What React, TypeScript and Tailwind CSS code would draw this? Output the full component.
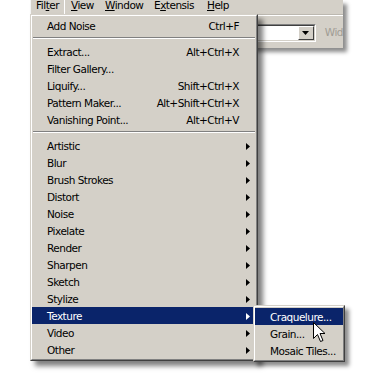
import React from "react";

type Item = { label: string; shortcut?: string; arrow?: boolean; active?: boolean };

const groups: Item[][] = [
  [{ label: "Add Noise", shortcut: "Ctrl+F" }],
  [
    { label: "Extract...", shortcut: "Alt+Ctrl+X" },
    { label: "Filter Gallery..." },
    { label: "Liquify...", shortcut: "Shift+Ctrl+X" },
    { label: "Pattern Maker...", shortcut: "Alt+Shift+Ctrl+X" },
    { label: "Vanishing Point...", shortcut: "Alt+Ctrl+V" },
  ],
  [
    { label: "Artistic", arrow: true },
    { label: "Blur", arrow: true },
    { label: "Brush Strokes", arrow: true },
    { label: "Distort", arrow: true },
    { label: "Noise", arrow: true },
    { label: "Pixelate", arrow: true },
    { label: "Render", arrow: true },
    { label: "Sharpen", arrow: true },
    { label: "Sketch", arrow: true },
    { label: "Stylize", arrow: true },
    { label: "Texture", arrow: true, active: true },
    { label: "Video", arrow: true },
    { label: "Other", arrow: true },
  ],
];

const subItems: Item[] = [
  { label: "Craquelure...", active: true },
  { label: "Grain..." },
  { label: "Mosaic Tiles..." },
];

function Arrow({ white }: { white?: boolean }) {
  return (
    <svg width="4" height="7" viewBox="0 0 4 7" className="shrink-0 -mt-[1px]">
      <path d="M0 0L4 3.5L0 7Z" fill={white ? "#ffffff" : "#000000"} />
    </svg>
  );
}

function Row({ item }: { item: Item }) {
  return (
    <div
      className={`flex h-[17px] items-center pt-[2px] pl-[15px] pr-[6px] whitespace-nowrap ${
        item.active ? "bg-[#0a246a] text-white" : "text-black"
      }`}
    >
      <span className="flex-1">{item.label}</span>
      {item.shortcut && <span className="pr-[11px]">{item.shortcut}</span>}
      {item.arrow && <Arrow white={item.active} />}
    </div>
  );
}

function Separator() {
  return (
    <div className="h-[9px] pt-[3px] px-[1px]">
      <div className="border-t border-b border-t-[#808080] border-b-white" />
    </div>
  );
}

// classic 3d raised frame
function Frame({ children, className }: { children: React.ReactNode; className: string }) {
  return (
    <div
      className={`absolute border border-t-[#d4d0c8] border-l-[#d4d0c8] border-r-[#404040] border-b-[#404040] bg-[#d4d0c8] ${className}`}
    >
      <div className="border border-t-white border-l-white border-r-[#808080] border-b-[#808080] py-[1px]">
        {children}
      </div>
    </div>
  );
}

export default function App() {
  const bar = [
    { pre: "Fil", u: "t", post: "er", w: "w-[35px]" },
    { pre: "", u: "V", post: "iew", w: "w-[34px]" },
    { pre: "", u: "W", post: "indow", w: "w-[49px]" },
    { pre: "E", u: "x", post: "tensis", w: "w-[53px]" },
    { pre: "", u: "H", post: "elp", w: "w-[40px]" },
  ];

  return (
    <div className="relative w-[390px] h-[373px] bg-white overflow-hidden font-['DejaVu_Sans',Verdana,sans-serif] text-[10.5px] tracking-[-0.5px] text-black">
      {/* app window strip */}
      <div className="ml-[30px] w-[313px] h-[48px] bg-[#d4d0c8] shadow-[4px_4px_4px_rgba(0,0,0,0.45)]">
        <div className="flex h-[15px] border-b border-[#bcb8b0]">
          {bar.map((b, i) => (
            <div
              key={i}
              className={`${b.w} h-[14px] pl-[5px] leading-[11px] ${
                i === 0 ? "border-l border-r border-l-[#f4f4f4] border-r-white" : "pl-[6px]"
              }`}
            >
              {b.pre}
              <span className="underline underline-offset-[1px]">{b.u}</span>
              {b.post}
            </div>
          ))}
        </div>
        <div className="h-px bg-white" />
        <div className="flex items-center pt-[8px]">
          <div className="ml-[170px] w-[118px] h-[18px] border border-t-[#808080] border-l-[#808080] border-r-white border-b-white">
            <div className="flex justify-end h-full bg-white border border-t-[#404040] border-l-[#404040] border-r-[#d4d0c8] border-b-[#d4d0c8]">
              <div className="flex items-center justify-center w-[16px] h-full bg-[#d4d0c8] border border-t-white border-l-white border-r-[#404040] border-b-[#404040]">
                <svg width="7" height="4" viewBox="0 0 7 4">
                  <path d="M0 0H7L3.5 4Z" fill="#000" />
                </svg>
              </div>
            </div>
          </div>
          <span className="ml-[9px] text-[#a09c94]">Wid</span>
        </div>
      </div>

      {/* Filter menu */}
      <Frame className="left-[30px] top-[14px] w-[228px] shadow-[5px_5px_5px_rgba(0,0,0,0.5)]">
        {groups.map((g, gi) => (
          <div key={gi}>
            {gi > 0 && <Separator />}
            {g.map((it) => (
              <Row key={it.label} item={it} />
            ))}
          </div>
        ))}
      </Frame>

      {/* Texture submenu */}
      <Frame className="left-[253px] top-[305px] w-[92px] shadow-[4px_4px_4px_rgba(0,0,0,0.45)]">
        {subItems.map((it) => (
          <Row key={it.label} item={it} />
        ))}
      </Frame>

      {/* mouse pointer */}
      <svg className="absolute left-[313px] top-[322px]" width="13" height="21" viewBox="0 0 13 21">
        <path
          d="M0.5 0.5V16.5L4.5 12.5L7.5 19.5L10 18.5L7 11.5H12Z"
          fill="#ffffff"
          stroke="#000000"
          strokeWidth="1"
          strokeLinejoin="miter"
        />
      </svg>
    </div>
  );
}
